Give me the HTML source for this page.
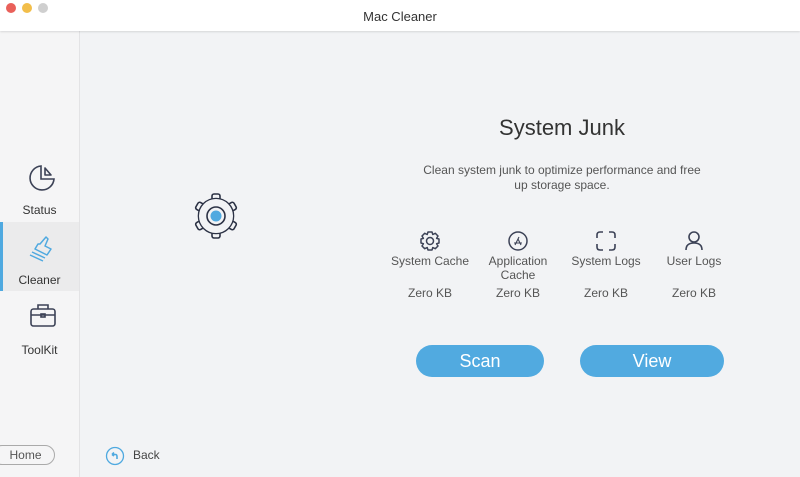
<!DOCTYPE html>
<html><head><meta charset="utf-8"><style>
*{margin:0;padding:0;box-sizing:border-box}
body{width:800px;height:477px;overflow:hidden;background:#f2f3f5;font-family:"Liberation Sans",sans-serif;color:#4a4a4a;position:relative}
.tb{position:absolute;left:0;top:0;width:800px;height:31px;background:#fff;box-shadow:0 1px 2px rgba(0,0,0,.12);z-index:2}
.tb .t{position:absolute;top:9px;width:100%;text-align:center;font-size:13px;color:#333}
.dot{position:absolute;top:3px;width:10px;height:10px;border-radius:50%}
.side{position:absolute;left:0;top:31px;width:80px;height:446px;background:#f5f5f6;border-right:1px solid #e3e3e5}
.it{position:absolute;left:0;width:79px;text-align:center;font-size:12px;color:#333}
.sel{background:#ebebec}
.bar{position:absolute;left:0;top:0;width:3px;height:100%;background:#4fa9e0}
.lbl{position:absolute;text-align:center;font-size:12px;color:#555;width:90px}
.btn{position:absolute;height:32px;border-radius:16px;background:#51aae0;color:#fff;font-size:18px;text-align:center;line-height:32px}
</style></head><body>
<div class="tb"><div class="dot" style="left:6px;background:#e9605a"></div><div class="dot" style="left:22px;background:#f2be4a"></div><div class="dot" style="left:38px;background:#cfcfcf"></div><div class="t">Mac Cleaner</div></div>
<div class="side">
 <div class="it" style="top:130px;height:60px">
  <svg width="32" height="32" viewBox="0 0 32 32" style="position:absolute;left:26px;top:1px" fill="none" stroke="#3c4256" stroke-width="1.6"><path d="M15 4A12 12 0 1 0 28 17L15 17Z"/><path d="M19 13L25 13L19 6Z" stroke-linejoin="round"/></svg>
  <div style="position:absolute;top:42px;width:100%">Status</div></div>
 <div class="it sel" style="top:191px;height:69px"><div class="bar"></div>
  <svg width="32" height="32" viewBox="0 0 32 32" style="position:absolute;left:27px;top:10px" fill="none" stroke="#4fa9e0" stroke-width="1.5" stroke-linejoin="round"><path d="M13 12L19 5L21 7L18 14L24 17L20 23L8 17L11 12Z"/><path d="M5 20L18 26M3 23L16 29"/></svg>
  <div style="position:absolute;top:51px;width:100%">Cleaner</div></div>
 <div class="it" style="top:270px;height:60px">
  <svg width="30" height="30" viewBox="0 0 30 30" style="position:absolute;left:28px;top:0" fill="none" stroke="#3c4256" stroke-width="1.6"><rect x="3" y="8" width="24" height="17" rx="2.5"/><path d="M10 8V4H20V8M3 14H27"/><rect x="13" y="13" width="4" height="3"/></svg>
  <div style="position:absolute;top:42px;width:100%">ToolKit</div></div>
 <div style="position:absolute;left:-8px;top:414px;width:63px;height:20px;border:1px solid #aaa;border-radius:10px;font-size:12px;text-align:center;line-height:18px;padding-left:4px;color:#555">Home</div>
</div>
<svg width="60" height="60" viewBox="0 0 60 60" style="position:absolute;left:186px;top:186px">
 <g fill="#f2f3f5" stroke="#2c3245" stroke-width="1.6" stroke-linejoin="round">
  <g id="t"><rect x="26" y="8" width="8" height="7" rx="2"/></g>
  <use href="#t" transform="rotate(60 30 30)"/><use href="#t" transform="rotate(120 30 30)"/><use href="#t" transform="rotate(180 30 30)"/><use href="#t" transform="rotate(240 30 30)"/><use href="#t" transform="rotate(300 30 30)"/>
  <circle cx="30" cy="30" r="17.5"/></g>
 <circle cx="30" cy="30" r="17" fill="#f2f3f5"/>
 <circle cx="30" cy="30" r="9" fill="none" stroke="#2c3245" stroke-width="1.6"/>
 <circle cx="30" cy="30" r="5.5" fill="#4fa9e0"/>
</svg>
<div style="position:absolute;left:420px;top:115px;width:284px;text-align:center;font-size:22px;color:#333">System Junk</div>
<div style="position:absolute;left:420px;top:163px;width:284px;text-align:center;font-size:12px;line-height:15px;color:#555">Clean system junk to optimize performance and free up storage space.</div>
<svg width="22" height="22" viewBox="0 0 22 22" style="position:absolute;left:419px;top:230px" fill="none" stroke="#3c4256" stroke-width="1.5"><path d="M9 2H13L13.8 4.5L16.3 3.3L19 6L17.6 8.4L20 9V13L17.6 13.7L19 16L16.3 18.7L13.8 17.5L13 20H9L8.2 17.5L5.7 18.7L3 16L4.4 13.7L2 13V9L4.4 8.4L3 6L5.7 3.3L8.2 4.5Z" stroke-linejoin="round"/><circle cx="11" cy="11" r="3.5"/></svg>
<svg width="22" height="22" viewBox="0 0 22 22" style="position:absolute;left:507px;top:230px" fill="none" stroke="#3c4256" stroke-width="1.5"><circle cx="11" cy="11" r="9"/><path d="M8 15L12 7M14 15L11 9M7 13H15" stroke-width="1.1"/></svg>
<svg width="22" height="22" viewBox="0 0 22 22" style="position:absolute;left:595px;top:230px" fill="none" stroke="#3c4256" stroke-width="1.6"><path d="M2 8V5Q2 2 5 2H8M14 2H17Q20 2 20 5V8M20 14V17Q20 20 17 20H14M8 20H5Q2 20 2 17V14"/></svg>
<svg width="22" height="22" viewBox="0 0 22 22" style="position:absolute;left:683px;top:230px" fill="none" stroke="#3c4256" stroke-width="1.6"><circle cx="11" cy="7" r="5"/><path d="M3 20Q3 13 11 13Q19 13 19 20"/></svg>
<div class="lbl" style="left:385px;top:254px">System Cache</div>
<div class="lbl" style="left:473px;top:254px;line-height:14px">Application<br>Cache</div>
<div class="lbl" style="left:561px;top:254px">System Logs</div>
<div class="lbl" style="left:649px;top:254px">User Logs</div>
<div class="lbl" style="left:385px;top:286px">Zero KB</div>
<div class="lbl" style="left:473px;top:286px">Zero KB</div>
<div class="lbl" style="left:561px;top:286px">Zero KB</div>
<div class="lbl" style="left:649px;top:286px">Zero KB</div>
<div class="btn" style="left:416px;top:345px;width:128px">Scan</div>
<div class="btn" style="left:580px;top:345px;width:144px">View</div>
<svg width="20" height="20" viewBox="0 0 20 20" style="position:absolute;left:105px;top:446px" fill="none" stroke="#4fa9e0" stroke-width="1.3"><circle cx="10" cy="10" r="8.5"/><path d="M7 8.5H10.5Q12 8.5 12 10.5V13M7 8.5L9 6.5M7 8.5L9 10" stroke-width="1.6"/></svg>
<div style="position:absolute;left:133px;top:448px;font-size:12px;color:#444">Back</div>
</body></html>
